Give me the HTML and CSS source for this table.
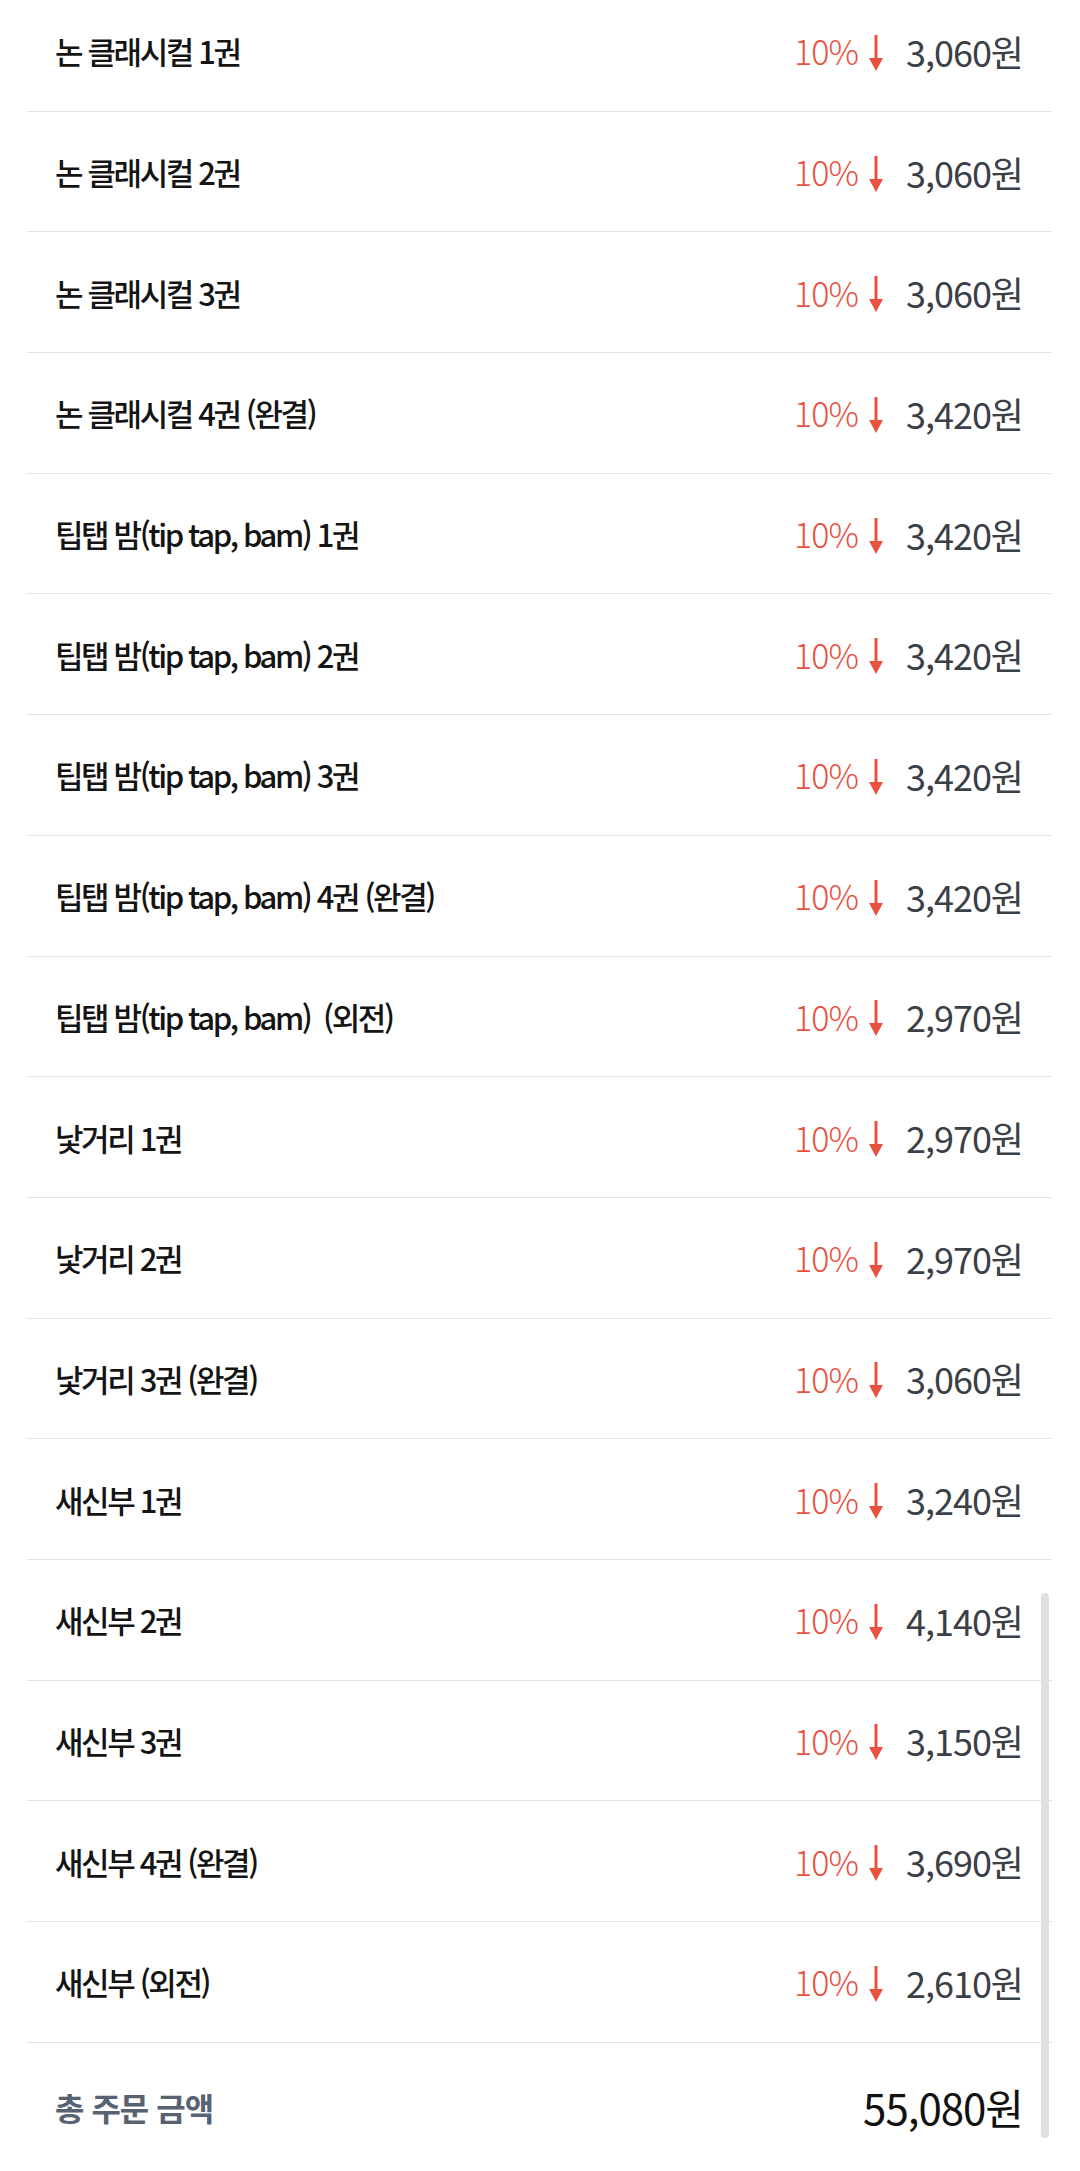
FILE: index.html
```html
<!DOCTYPE html>
<html lang="ko">
<head>
    <meta charset="UTF-8">
    <meta name="viewport" content="width=device-width, initial-scale=1.0">
    <title>주문 금액</title>
    <link rel="stylesheet" href="styles.css">
</head>
<body>
    <div class="order">
        <ul class="items">
            <li class="item"><span class="name">논 클래시컬 1권</span><span class="price"><span class="sale">10%</span><svg class="down" viewBox="0 0 14 36"><path d="M7 0V26"/><polygon points="0,23 14,23 7,36"/></svg><span class="won">3,060원</span></span></li>
            <li class="item"><span class="name">논 클래시컬 2권</span><span class="price"><span class="sale">10%</span><svg class="down" viewBox="0 0 14 36"><path d="M7 0V26"/><polygon points="0,23 14,23 7,36"/></svg><span class="won">3,060원</span></span></li>
            <li class="item"><span class="name">논 클래시컬 3권</span><span class="price"><span class="sale">10%</span><svg class="down" viewBox="0 0 14 36"><path d="M7 0V26"/><polygon points="0,23 14,23 7,36"/></svg><span class="won">3,060원</span></span></li>
            <li class="item"><span class="name">논 클래시컬 4권 (완결)</span><span class="price"><span class="sale">10%</span><svg class="down" viewBox="0 0 14 36"><path d="M7 0V26"/><polygon points="0,23 14,23 7,36"/></svg><span class="won">3,420원</span></span></li>
            <li class="item"><span class="name">팁탭 밤(tip tap, bam) 1권</span><span class="price"><span class="sale">10%</span><svg class="down" viewBox="0 0 14 36"><path d="M7 0V26"/><polygon points="0,23 14,23 7,36"/></svg><span class="won">3,420원</span></span></li>
            <li class="item"><span class="name">팁탭 밤(tip tap, bam) 2권</span><span class="price"><span class="sale">10%</span><svg class="down" viewBox="0 0 14 36"><path d="M7 0V26"/><polygon points="0,23 14,23 7,36"/></svg><span class="won">3,420원</span></span></li>
            <li class="item"><span class="name">팁탭 밤(tip tap, bam) 3권</span><span class="price"><span class="sale">10%</span><svg class="down" viewBox="0 0 14 36"><path d="M7 0V26"/><polygon points="0,23 14,23 7,36"/></svg><span class="won">3,420원</span></span></li>
            <li class="item"><span class="name">팁탭 밤(tip tap, bam) 4권 (완결)</span><span class="price"><span class="sale">10%</span><svg class="down" viewBox="0 0 14 36"><path d="M7 0V26"/><polygon points="0,23 14,23 7,36"/></svg><span class="won">3,420원</span></span></li>
            <li class="item"><span class="name">팁탭 밤(tip tap, bam) &nbsp;(외전)</span><span class="price"><span class="sale">10%</span><svg class="down" viewBox="0 0 14 36"><path d="M7 0V26"/><polygon points="0,23 14,23 7,36"/></svg><span class="won">2,970원</span></span></li>
            <li class="item"><span class="name">낯거리 1권</span><span class="price"><span class="sale">10%</span><svg class="down" viewBox="0 0 14 36"><path d="M7 0V26"/><polygon points="0,23 14,23 7,36"/></svg><span class="won">2,970원</span></span></li>
            <li class="item"><span class="name">낯거리 2권</span><span class="price"><span class="sale">10%</span><svg class="down" viewBox="0 0 14 36"><path d="M7 0V26"/><polygon points="0,23 14,23 7,36"/></svg><span class="won">2,970원</span></span></li>
            <li class="item"><span class="name">낯거리 3권 (완결)</span><span class="price"><span class="sale">10%</span><svg class="down" viewBox="0 0 14 36"><path d="M7 0V26"/><polygon points="0,23 14,23 7,36"/></svg><span class="won">3,060원</span></span></li>
            <li class="item"><span class="name">새신부 1권</span><span class="price"><span class="sale">10%</span><svg class="down" viewBox="0 0 14 36"><path d="M7 0V26"/><polygon points="0,23 14,23 7,36"/></svg><span class="won">3,240원</span></span></li>
            <li class="item"><span class="name">새신부 2권</span><span class="price"><span class="sale">10%</span><svg class="down" viewBox="0 0 14 36"><path d="M7 0V26"/><polygon points="0,23 14,23 7,36"/></svg><span class="won">4,140원</span></span></li>
            <li class="item"><span class="name">새신부 3권</span><span class="price"><span class="sale">10%</span><svg class="down" viewBox="0 0 14 36"><path d="M7 0V26"/><polygon points="0,23 14,23 7,36"/></svg><span class="won">3,150원</span></span></li>
            <li class="item"><span class="name">새신부 4권 (완결)</span><span class="price"><span class="sale">10%</span><svg class="down" viewBox="0 0 14 36"><path d="M7 0V26"/><polygon points="0,23 14,23 7,36"/></svg><span class="won">3,690원</span></span></li>
            <li class="item"><span class="name">새신부 (외전)</span><span class="price"><span class="sale">10%</span><svg class="down" viewBox="0 0 14 36"><path d="M7 0V26"/><polygon points="0,23 14,23 7,36"/></svg><span class="won">2,610원</span></span></li>
        </ul>
        <div class="total">
            <span class="total-label">총 주문 금액</span>
            <span class="total-value">55,080원</span>
        </div>
        <div class="scrollbar"></div>
    </div>
</body>
</html>
```

FILE: styles.css
```css
body {
    margin: 0;
    background: #fff;
    font-family: "Noto Sans CJK KR", "Noto Sans", sans-serif;
    color: #151515;
}

.order {
    position: relative;
    margin: -9px 28px 0 27px;
    overflow: hidden;
}

.items {
    list-style: none;
    margin: 0;
    padding: 0;
}

.item {
    box-sizing: border-box;
    height: 120.69px;
    display: flex;
    align-items: center;
    justify-content: space-between;
    padding: 0 29px 0 28px;
    border-bottom: 1px solid #e2e2e2;
}

.name {
    font-size: 31px;
    font-weight: 500;
    letter-spacing: -2.4px;
    color: #141414;
}

.price {
    display: flex;
    align-items: center;
}

.sale {
    font-size: 34px;
    font-weight: 300;
    letter-spacing: -1px;
    color: #e8533f;
}

.down {
    width: 14px;
    height: 36px;
    margin: 4px 23px 0 11px;
}

.down path {
    stroke: #e8533f;
    stroke-width: 3;
    fill: none;
}

.down polygon {
    fill: #e8533f;
}

.won {
    font-size: 36px;
    font-weight: 400;
    letter-spacing: -1px;
    color: #3b4047;
}

.total {
    height: 128px;
    display: flex;
    align-items: center;
    justify-content: space-between;
    padding: 0 29px 0 28px;
}

.total-label {
    font-size: 32px;
    font-weight: 700;
    letter-spacing: -1px;
    color: #596272;
}

.total-value {
    font-size: 42px;
    font-weight: 400;
    letter-spacing: -1px;
    color: #111;
}

.scrollbar {
    position: absolute;
    left: 1014px;
    top: 1602px;
    width: 8px;
    height: 545px;
    border-radius: 4px;
    background: #e0e0e0;
}
```
